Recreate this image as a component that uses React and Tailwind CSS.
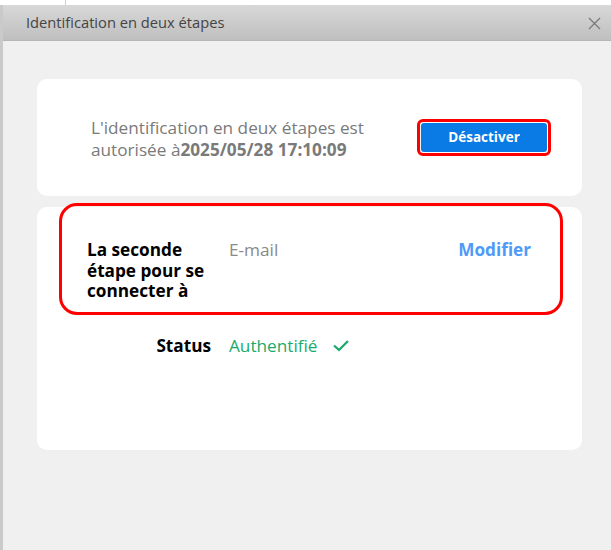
import React from "react";

export default function App() {
  return (
    <div className="w-[611px] h-[550px] bg-white pt-[5px] relative overflow-hidden" style={{ fontFamily: '"Open Sans", "Noto Sans", sans-serif' }}>
      <div className="absolute left-[65px] top-0 w-px h-[5px] bg-[#d0d0d0]" />
      <div className="h-[545px] border-l-[3px] border-[#cacaca] flex flex-col bg-[#f0f0f0]">
        <div className="h-[36px] shrink-0 flex items-center justify-between pl-[23px] pr-[10px] bg-gradient-to-b from-[#d8d8d8] to-[#bfbfbf] border-b border-[#b5b5b5]">
          <span className="text-[14.7px] text-[#444444]">Identification en deux étapes</span>
          <svg width="13" height="13" viewBox="0 0 13 13" className="mt-[2px]">
            <path d="M1 1 L12 12 M12 1 L1 12" stroke="#7a7a7a" strokeWidth="1.3" />
          </svg>
        </div>
        <div className="flex flex-col pt-[38px] pl-[34px] pr-[29px] gap-[11px]">
          <div className="bg-white rounded-[10px] h-[117px] flex items-center pl-[54px] pr-[31px] justify-between">
            <div className="w-[300px] text-[17.2px] leading-[22px] text-[#7a7a7a] mt-[2px]">
              L'identification en deux étapes est autorisée à<span className="font-bold">2025/05/28 17:10:09</span>
            </div>
            <div className="border-[3px] border-[#ff0000] rounded-[6px] p-px bg-white">
              <button className="w-[126px] h-[29px] rounded-[3px] bg-[#0a7ae4] text-white font-bold text-[13.5px] flex items-center justify-center">
                Désactiver
              </button>
            </div>
          </div>
          <div className="bg-white rounded-[10px] h-[243px] relative pt-[33px]">
            <div className="absolute left-[22px] top-[-4px] w-[504px] h-[112px] border-[3px] border-[#ff0000] rounded-[18px]" />
            <div className="flex items-start pl-[50px] pr-[51px]">
              <div className="w-[124px] text-[17.2px] leading-[20.5px] font-bold text-black">La seconde étape pour se connecter à</div>
              <div className="ml-[18px] flex-1 text-[17.2px] leading-[20.5px] text-[#8a8a8a]">E-mail</div>
              <div className="text-[17.2px] leading-[20.5px] font-bold text-[#4e9bf7]">Modifier</div>
            </div>
            <div className="flex items-center pl-[50px] mt-[33px]">
              <div className="w-[124px] text-right text-[17.2px] leading-[21px] font-bold text-black">Status</div>
              <div className="ml-[18px] text-[17.2px] leading-[21px] text-[#1aab6c]">Authentifié</div>
              <svg width="18" height="13" viewBox="0 0 18 13" className="ml-[14px] mt-[1px]">
                <path d="M2 6.5 L7 11 L16 2" fill="none" stroke="#1aab6c" strokeWidth="2.3" />
              </svg>
            </div>
          </div>
        </div>
      </div>
    </div>
  );
}
